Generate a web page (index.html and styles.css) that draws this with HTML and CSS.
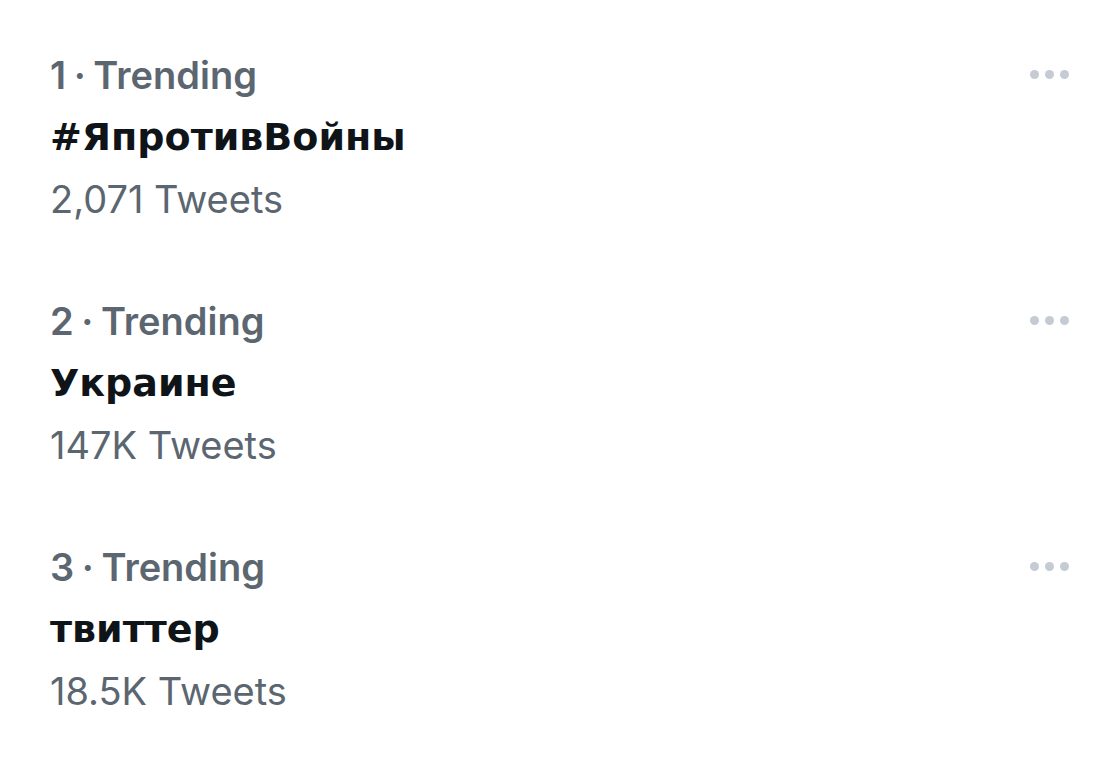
FILE: index.html
```html
<!DOCTYPE html>
<html>
<head>
<meta charset="utf-8">
<link rel="stylesheet" href="styles.css">
</head>
<body>
<main class="trends">
  <section class="trend">
    <div class="info">
      <div class="meta">1 · Trending</div>
      <div class="title">#ЯпротивВойны</div>
      <div class="count">2,071 Tweets</div>
    </div>
    <div class="more"><span></span><span></span><span></span></div>
  </section>
  <section class="trend">
    <div class="info">
      <div class="meta">2 · Trending</div>
      <div class="title">Украине</div>
      <div class="count">147K Tweets</div>
    </div>
    <div class="more"><span></span><span></span><span></span></div>
  </section>
  <section class="trend">
    <div class="info">
      <div class="meta">3 · Trending</div>
      <div class="title">твиттер</div>
      <div class="count">18.5K Tweets</div>
    </div>
    <div class="more"><span></span><span></span><span></span></div>
  </section>
</main>
</body>
</html>
```
FILE: styles.css
```css
html, body {
  margin: 0;
  background: #ffffff;
}
body {
  font-family: Inter, "Noto Sans", "Liberation Sans", sans-serif;
}
.trends {
  display: flex;
  flex-direction: column;
  gap: 60px;
  padding: 44px 51px 0 50px;
}
.trend {
  display: flex;
  justify-content: space-between;
  align-items: flex-start;
}
.info {
  display: flex;
  flex-direction: column;
}
.meta, .title, .count {
  font-size: 38px;
  line-height: 62px;
  white-space: nowrap;
}
.meta {
  color: #5b6670;
  font-weight: 600;
  word-spacing: -2px;
}
.title {
  font-family: "DejaVu Sans", Inter, sans-serif;
  color: #0f1419;
  font-weight: 700;
}
.count {
  color: #5b6670;
  font-weight: 400;
}
.more {
  display: flex;
  gap: 6px;
  height: 60px;
  align-items: center;
}
.more span {
  width: 9px;
  height: 9px;
  border-radius: 50%;
  background: #c4cbd3;
}
```
